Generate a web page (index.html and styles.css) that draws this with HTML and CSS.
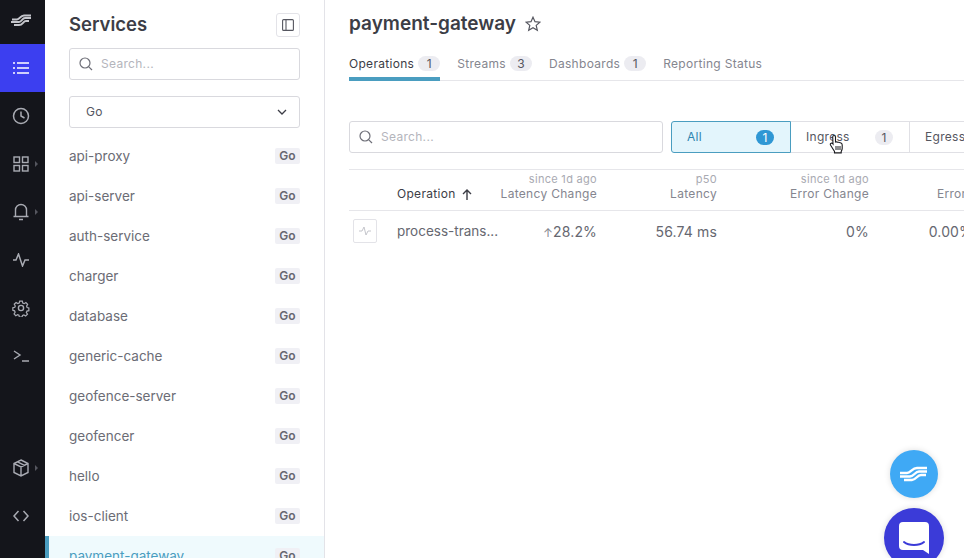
FILE: index.html
```html
<!DOCTYPE html>
<html lang="en">
<head>
  <meta charset="UTF-8" />
  <title>payment-gateway</title>
  <link rel="stylesheet" href="styles.css">
</head>
<body>
  <nav class="rail">
    <div class="rail-item logo">
      <svg width="21" height="13" viewBox="0 0 21 13" fill="none" stroke="#c4c5cb" stroke-width="2"><path d="M1 5.500h5c3 0 3-4 7-4h7M0 8h8c3 0 3-4 6-4h6M3 11h5c4 0 4-4 7-4h3"/></svg>
    </div>
    <div class="rail-item active">
      <svg width="16" height="12" viewBox="0 0 16 12" fill="none" stroke="#fff" stroke-width="1.5"><path d="M4 1h12M4 6h12M4 11h12M0 1h2M0 6h2M0 11h2"/></svg>
    </div>
    <div class="rail-item">
      <svg width="18" height="18" viewBox="0 0 18 18" fill="none" stroke="#a9abb3" stroke-width="1.5"><circle cx="9" cy="9" r="7.500"/><path d="M9 4.500V9l3.500 2"/></svg>
    </div>
    <div class="rail-item">
      <svg width="16" height="16" viewBox="0 0 16 16" fill="none" stroke="#a9abb3" stroke-width="1.4"><rect x="1" y="1" width="5.500" height="5.500"/><rect x="9.500" y="1" width="5.500" height="5.500"/><rect x="1" y="9.500" width="5.500" height="5.500"/><rect x="9.500" y="9.500" width="5.500" height="5.500"/></svg>
      <span class="caret"></span>
    </div>
    <div class="rail-item">
      <svg width="16" height="18" viewBox="0 0 16 18" fill="none" stroke="#a9abb3" stroke-width="1.4"><path d="M0.500 13.500h15M2.500 13.500V7a5.500 5.500 0 0 1 11 0v6.500M6 16.500h4"/></svg>
      <span class="caret"></span>
    </div>
    <div class="rail-item">
      <svg width="16" height="14" viewBox="0 0 16 14" fill="none" stroke="#a9abb3" stroke-width="1.5"><path d="M0 7h3l2.500-6 4 12L12 7h4"/></svg>
    </div>
    <div class="rail-item">
      <svg width="18" height="18" viewBox="0 0 18 18" fill="none" stroke="#a9abb3" stroke-width="1.4"><circle cx="9" cy="9" r="2.600"/><path d="M7.500 1h3l.5 2.300 1.600.7 2-1.300 2 2.100-1.200 2 .6 1.600 2 .6v3l-2.200.5-.7 1.600 1.300 2-2.100 2-2-1.200-1.600.6-.6 2h-3l-.5-2.200-1.600-.6-2 1.200-2-2.100 1.200-2-.6-1.600-2-.5v-3l2.200-.5.6-1.600-1.200-2 2.100-2 2 1.200 1.600-.6z" transform="translate(1.200 1.200) scale(.87)"/></svg>
    </div>
    <div class="rail-item">
      <svg width="16" height="12" viewBox="0 0 16 12" fill="none" stroke="#a9abb3" stroke-width="1.4"><path d="M1 1l6 4-6 4M9 11h7"/></svg>
    </div>
    <div class="rail-spacer"></div>
    <div class="rail-item">
      <svg width="18" height="18" viewBox="0 0 18 18" fill="none" stroke="#a9abb3" stroke-width="1.4"><path d="M9 1l7 3.500v9L9 17l-7-3.500v-9zM2 4.500L9 8l7-3.500M9 8v9M5.500 2.800l7 3.500"/></svg>
      <span class="caret"></span>
    </div>
    <div class="rail-item">
      <svg width="16" height="12" viewBox="0 0 16 12" fill="none" stroke="#a9abb3" stroke-width="1.5"><path d="M5.500 1L1 6l4.500 5M10.500 1L15 6l-4.500 5"/></svg>
    </div>
    <div class="rail-tail"></div>
  </nav>

  <aside class="services">
    <div class="services-head">
      <h2>Services</h2>
      <button class="icon-btn">
        <svg width="12" height="12" viewBox="0 0 12 12" fill="none" stroke="#55565f" stroke-width="1.100"><rect x=".6" y=".6" width="10.800" height="10.800" rx="1"/><path d="M4 .6v10.800"/></svg>
      </button>
    </div>
    <div class="field services-search">
      <svg class="search-icon" width="14" height="14" viewBox="0 0 14 14" fill="none" stroke="#6e6f78" stroke-width="1.200"><circle cx="6" cy="6" r="5"/><path d="M9.800 9.800L13 13"/></svg>
      <span>Search...</span>
    </div>
    <div class="field select">
      <span>Go</span>
      <svg width="10" height="6" viewBox="0 0 10 6" fill="none" stroke="#3c3d46" stroke-width="1.300"><path d="M1 1l4 4 4-4"/></svg>
    </div>
    <ul class="service-list">
      <li><span>api-proxy</span><b>Go</b></li>
      <li><span>api-server</span><b>Go</b></li>
      <li><span>auth-service</span><b>Go</b></li>
      <li><span>charger</span><b>Go</b></li>
      <li><span>database</span><b>Go</b></li>
      <li><span>generic-cache</span><b>Go</b></li>
      <li><span>geofence-server</span><b>Go</b></li>
      <li><span>geofencer</span><b>Go</b></li>
      <li><span>hello</span><b>Go</b></li>
      <li><span>ios-client</span><b>Go</b></li>
      <li class="current"><span>payment-gateway</span><b>Go</b></li>
    </ul>
  </aside>

  <main class="main">
    <div class="title-row">
      <h1>payment-gateway</h1>
      <svg width="16" height="16" viewBox="0 0 16 16" fill="none" stroke="#55565f" stroke-width="1.200"><path d="M8 1.200l2 4.500 4.900.5-3.700 3.200 1.100 4.800L8 11.700l-4.300 2.500 1.100-4.800L1.100 6.200 6 5.700z"/></svg>
    </div>
    <div class="tabs">
      <div class="tab on">Operations <span class="count">1</span></div>
      <div class="tab">Streams <span class="count">3</span></div>
      <div class="tab">Dashboards <span class="count">1</span></div>
      <div class="tab">Reporting Status</div>
    </div>
    <div class="filters">
      <div class="field ops-search">
        <svg class="search-icon" width="14" height="14" viewBox="0 0 14 14" fill="none" stroke="#6e6f78" stroke-width="1.200"><circle cx="6" cy="6" r="5"/><path d="M9.800 9.800L13 13"/></svg>
        <span>Search...</span>
      </div>
      <div class="segments">
        <div class="seg selected">All <span class="seg-count">1</span></div>
        <div class="seg">Ingress <span class="seg-count">1</span></div>
        <div class="seg">Egress</div>
      </div>
    </div>
    <div class="table">
      <div class="thead">
        <div></div>
        <div class="op-head">Operation
          <svg width="10" height="11" viewBox="0 0 10 11" fill="none" stroke="#3c3d46" stroke-width="1.400"><path d="M5 11V1M1 5l4-4 4 4"/></svg>
        </div>
        <div class="num"><small>since 1d ago</small>Latency Change</div>
        <div class="num"><small>p50</small>Latency</div>
        <div class="num"><small>since 1d ago</small>Error Change</div>
        <div class="num"><small>&nbsp;</small>Errors</div>
      </div>
      <div class="trow">
        <div><span class="spark">
          <svg width="12" height="10" viewBox="0 0 12 10" fill="none" stroke="#c4c5cb" stroke-width="1"><path d="M0 5h3l2-4 2 8 2-4h3"/></svg>
        </span></div>
        <div class="op-name">process-trans...</div>
        <div class="num"><span class="up">↑</span>28.2%</div>
        <div class="num">56.74 ms</div>
        <div class="num">0%</div>
        <div class="num">0.00%</div>
      </div>
    </div>
    <svg class="cursor" width="16" height="20" viewBox="0 0 16 20"><path d="M5 1.500c1 0 1.500.6 1.500 1.500v5l1-.2 1 .3 1 .1 1 .4 1.500.5c.8.4 1.200 1 1.200 2v3.400c0 1-.5 2-1 3v1.400H5.500v-1.400L1.800 11.500c-.8-1-.6-2 .2-2.300.7-.3 1.500.1 2 .8l-.3-7c0-.9.500-1.500 1.300-1.500z" fill="#fff" stroke="#1a1a1e" stroke-width="1.100"/><path d="M7 12v4M9 12v4M11 12v4" stroke="#1a1a1e" stroke-width="1"/></svg>
    <div class="fab fab-brand">
      <svg width="32" height="18" viewBox="0 0 32 18" fill="none" stroke="#fff" stroke-width="2.400"><path d="M2 8h7c4 0 5-5 10-5h10M2 11.500h10c4 0 5-5 9-5h8M6 15h8c4 0 5-5 9-5h5"/></svg>
    </div>
    <div class="fab fab-chat">
      <svg width="30" height="32" viewBox="0 0 30 32"><path d="M4 0h22a4 4 0 0 1 4 4v28l-6-4H4a4 4 0 0 1-4-4V4a4 4 0 0 1 4-4z" fill="#fff"/><path d="M5 20c5 4 15 4 20 0" fill="none" stroke="#3b3bd8" stroke-width="2" stroke-linecap="round"/></svg>
    </div>
  </main>
</body>
</html>
```

FILE: styles.css
```css
* { box-sizing: border-box; }
html, body { height: 100%; }
body { margin: 0; height: 558px; overflow: hidden; display: flex; background: #fff; color: #55565f; font-family: Inter, "Liberation Sans", sans-serif; font-size: 14px; }

.rail { width: 45px; height: 558px; flex: none; background: #14151b; display: flex; flex-direction: column; }
.rail-item { height: 48px; flex: none; display: flex; align-items: center; justify-content: center; position: relative; padding-right: 3px; }
.rail-item.logo { height: 44px; padding-bottom: 4px; }
.rail-item.active { background: #3c3ff0; }
.rail-spacer { flex: 1; }
.rail-tail { height: 18px; flex: none; }
.caret { position: absolute; right: 7px; top: 21px; border-left: 3px solid #55565f; border-top: 3px solid transparent; border-bottom: 3px solid transparent; }

.services { width: 280px; height: 558px; flex: none; border-right: 1px solid #e3e3e8; padding-top: 13px; display: flex; flex-direction: column; overflow: hidden; }
.services-head { height: 23px; flex: none; margin: 0 24px; display: flex; justify-content: space-between; align-items: center; }
.services-head h2 { margin: 0; font-size: 18.500px; line-height: 23px; font-weight: 600; color: #3c3d46; }
.icon-btn { width: 24px; height: 24px; padding: 0; background: #fff; border: 1px solid #e3e3e8; border-radius: 3px; display: flex; align-items: center; justify-content: center; }

.field { height: 32px; flex: none; border: 1px solid #d9d9de; border-radius: 3px; display: flex; align-items: center; background: #fff; font-size: 12px; letter-spacing: .3px; }
.field span { color: #b4b5bc; padding-bottom: 2px; }
.search-icon { margin: 0 8px 0 9px; }
.services-search { margin: 12px 24px 0; }
.select { margin: 16px 24px 0; padding: 0 12px 0 16px; justify-content: space-between; }
.select span { color: #55565f; }

.service-list { list-style: none; margin: 8px 0 0; padding: 0; }
.service-list li { height: 40px; padding: 0 24px; display: flex; align-items: center; justify-content: space-between; font-size: 13.500px; color: #6b6c75; }
.service-list b { width: 25px; height: 16px; background: #f0f0f5; border-radius: 2px; font-size: 12px; line-height: 16px; font-weight: 600; text-align: center; color: #666770; }
.service-list .current { background: #effafd; box-shadow: inset 4px 0 0 #4a9dc0; color: #4a9dc0; }

.main { flex: none; width: 639px; height: 558px; position: relative; overflow: hidden; padding-left: 24px; }
.title-row { height: 23px; margin-top: 12px; display: flex; align-items: center; gap: 9px; }
.title-row h1 { margin: 0; font-size: 19px; line-height: 23px; font-weight: 600; color: #3c3d46; }

.tabs { margin-top: 18px; height: 28px; display: flex; gap: 17px; border-bottom: 1px solid #e6e6ea; font-size: 12px; letter-spacing: .3px; color: #85868f; width: 615px; }
.tab { height: 28px; padding-top: 2px; display: flex; gap: 4px; align-items: flex-start; line-height: 17px; white-space: nowrap; }
.tab.on { color: #3c3d46; border-bottom: 4px solid #4a9dc0; }
.count { width: 22px; height: 15px; margin-top: 1px; border-radius: 8px; background: #ececf1; color: #55565f; line-height: 15px; text-align: center; font-size: 12px; }

.filters { margin-top: 40px; display: flex; gap: 8px; }
.ops-search { width: 314px; flex: none; }
.segments { display: flex; flex: none; font-size: 12px; letter-spacing: .3px; }
.seg { width: 119px; height: 32px; flex: none; border: 1px solid #e0e0e5; border-left: 0; display: flex; align-items: center; justify-content: space-between; padding: 0 16px 2px 15px; color: #55565f; }
.seg.selected { width: 120px; border: 1px solid #4a9dc0; border-radius: 3px 0 0 3px; background: #e3f5fc; color: #2f85b0; }
.seg-count { width: 18px; height: 15px; margin-top: 2px; border-radius: 8px; background: #ececf1; line-height: 15px; text-align: center; font-size: 12px; }
.selected .seg-count { background: #2f97d4; color: #fff; }

.table { margin-top: 16px; width: 640px; font-size: 12px; letter-spacing: .3px; }
.thead, .trow { display: grid; grid-template-columns: 48px 90px 110px 120px 152px 104px; white-space: nowrap; }
.thead { height: 42px; border-top: 1px solid #e6e6ea; border-bottom: 1px solid #e6e6ea; line-height: 15px; padding-top: 2px; color: #85868f; }
.thead small { display: block; font-size: 11px; line-height: 14px; color: #a9aab2; }
.op-head { padding-top: 14px; color: #3c3d46; display: flex; gap: 6px; align-items: flex-start; }
.op-head svg { margin-top: 3px; }
.num { text-align: right; }
.trow { height: 42px; padding-bottom: 2px; align-items: center; font-size: 14px; letter-spacing: .15px; color: #666770; }
.op-name { font-size: 13.500px; letter-spacing: 0; }
.up { color: #85868f; font-size: 12px; }
.spark { width: 24px; height: 24px; margin-left: 4px; border: 1px solid #e3e3e8; border-radius: 2px; display: flex; align-items: center; justify-content: center; }

.cursor { position: absolute; left: 504px; top: 134px; }
.fab { position: absolute; border-radius: 50%; display: flex; justify-content: center; }
.fab-brand { left: 565px; top: 450px; width: 48px; height: 48px; background: #3fa9f5; box-shadow: 0 0 6px #0002; align-items: center; }
.fab-chat { left: 559px; top: 508px; width: 60px; height: 60px; background: #3b3bd8; box-shadow: 0 0 6px #0002; padding-top: 14px; }
```
